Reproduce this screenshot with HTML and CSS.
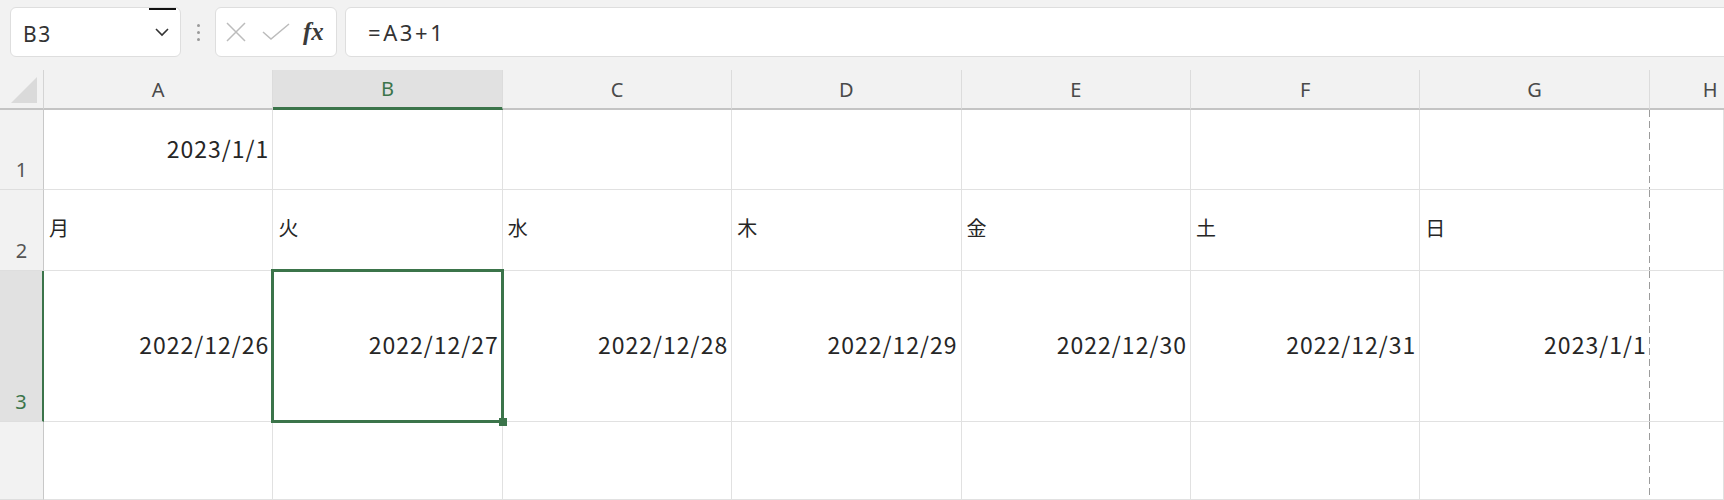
FILE: index.html
```html
<!DOCTYPE html>
<html lang="ja">
<head>
  <meta charset="UTF-8" />
  <title>Book1 - Excel</title>
  <link rel="stylesheet" href="styles.css">
</head>
<body>
  <div class="formula-bar">
    <div class="name-box">
      <span class="cell-ref">B3</span>
      <span class="focus-mark"></span>
      <svg class="chevron" width="16" height="10" viewBox="0 0 16 10"><path d="M2 2 L8 8 L14 2" fill="none" stroke="#333" stroke-width="1.6"/></svg>
    </div>
    <div class="grip"><i></i><i></i><i></i></div>
    <div class="fx-box">
      <svg width="22" height="22" viewBox="0 0 22 22"><path d="M2 2 L20 20 M20 2 L2 20" stroke="#bcbcbc" stroke-width="1.5" fill="none"/></svg>
      <svg width="28" height="18" viewBox="0 0 28 18"><path d="M1 9 L9 16 L27 1" stroke="#bcbcbc" stroke-width="1.5" fill="none"/></svg>
      <span class="fx">fx</span>
    </div>
    <div class="formula-input">=A3+1</div>
  </div>

  <div class="sheet">
    <div class="corner"><span class="corner-tri"></span></div>
    <div class="col-head">A</div>
    <div class="col-head active">B</div>
    <div class="col-head">C</div>
    <div class="col-head">D</div>
    <div class="col-head">E</div>
    <div class="col-head">F</div>
    <div class="col-head">G</div>
    <div class="col-head last">H</div>

    <div class="row-head">1</div>
    <div class="cell num">2023/1/1</div>
    <div class="cell"></div>
    <div class="cell"></div>
    <div class="cell"></div>
    <div class="cell"></div>
    <div class="cell"></div>
    <div class="cell page-end"></div>
    <div class="cell"></div>

    <div class="row-head">2</div>
    <div class="cell day">月</div>
    <div class="cell day">火</div>
    <div class="cell day">水</div>
    <div class="cell day">木</div>
    <div class="cell day">金</div>
    <div class="cell day">土</div>
    <div class="cell day page-end">日</div>
    <div class="cell"></div>

    <div class="row-head active">3</div>
    <div class="cell num">2022/12/26</div>
    <div class="cell num selected">2022/12/27</div>
    <div class="cell num">2022/12/28</div>
    <div class="cell num">2022/12/29</div>
    <div class="cell num">2022/12/30</div>
    <div class="cell num">2022/12/31</div>
    <div class="cell num page-end">2023/1/1</div>
    <div class="cell"></div>

    <div class="row-head"></div>
    <div class="cell"></div>
    <div class="cell"></div>
    <div class="cell"></div>
    <div class="cell"></div>
    <div class="cell"></div>
    <div class="cell"></div>
    <div class="cell page-end"></div>
    <div class="cell"></div>
  </div>
</body>
</html>
```

FILE: styles.css
```css
:root {
  --ui-font: 'Noto Sans', sans-serif;
  --cell-font: 'Noto Sans CJK JP', sans-serif;
  --chrome: #f2f2f2;
  --head-active: #e1e1e1;
  --grid: #e1e1e1;
  --green: #3b744a;
}
* {
  margin: 0;
  padding: 0;
  box-sizing: border-box;
}
body {
  width: 1724px;
  height: 500px;
  overflow: hidden;
  background: #fff;
  font-family: var(--ui-font);
}

/* formula bar */
.formula-bar {
  height: 70px;
  background: var(--chrome);
  display: flex;
  align-items: flex-start;
  padding: 7px 0 0 10px;
}
.name-box {
  position: relative;
  width: 171px;
  height: 50px;
  background: #fff;
  border: 1px solid #dedede;
  border-radius: 6px;
  display: flex;
  align-items: center;
  justify-content: space-between;
  padding: 0 10px 0 12px;
}
.cell-ref {
  font-size: 21px;
  color: #333;
  letter-spacing: 1.5px;
  margin-top: 3px;
}
.focus-mark {
  position: absolute;
  top: 0;
  left: 138px;
  width: 27px;
  height: 2px;
  background: #111;
}
.grip {
  width: 34px;
  height: 50px;
  display: flex;
  flex-direction: column;
  align-items: center;
  justify-content: center;
  gap: 4px;
}
.grip i {
  width: 3px;
  height: 3px;
  border-radius: 50%;
  background: #9a9a9a;
}
.fx-box {
  width: 122px;
  height: 50px;
  background: #fff;
  border: 1px solid #dedede;
  border-radius: 6px;
  display: flex;
  align-items: center;
  gap: 15px;
  padding-left: 9px;
}
.fx {
  font-family: 'Liberation Serif', 'DejaVu Serif', serif;
  font-style: italic;
  font-weight: bold;
  font-size: 25px;
  color: #3a3a3a;
  margin-left: -2px;
}
.formula-input {
  flex: 1;
  height: 50px;
  margin-left: 8px;
  margin-right: -20px;
  background: #fff;
  border: 1px solid #dedede;
  border-radius: 6px;
  display: flex;
  align-items: center;
  padding-left: 22px;
  font-size: 22px;
  letter-spacing: 2.6px;
  color: #333;
}

/* sheet grid */
.sheet {
  display: grid;
  grid-template-columns: 44px repeat(7, 229.4px) 1fr;
  grid-template-rows: 40px 80px 81px 151px 78px;
}
.corner {
  background: var(--chrome);
  border-right: 1px solid #d4d4d4;
  border-bottom: 2px solid #c4c4c4;
  position: relative;
}
.corner-tri {
  position: absolute;
  left: 11px;
  bottom: 5px;
  width: 0;
  height: 0;
  border-left: 26px solid transparent;
  border-bottom: 26px solid #dadada;
}
.col-head {
  background: var(--chrome);
  border-right: 1px solid #dcdcdc;
  border-bottom: 2px solid #c4c4c4;
  display: flex;
  align-items: center;
  justify-content: center;
  font-size: 20px;
  color: #4a4a4a;
}
.col-head.active {
  background: var(--head-active);
  color: var(--green);
  border-bottom: 3px solid var(--green);
}
.col-head.last {
  justify-content: flex-start;
  padding-left: 53px;
  border-right: 0;
}
.row-head {
  background: var(--chrome);
  border-right: 1px solid #c8c8c8;
  border-bottom: 1px solid #dedede;
  display: flex;
  align-items: flex-end;
  justify-content: center;
  padding-bottom: 6px;
  font-size: 20px;
  color: #555;
}
.row-head.active {
  background: var(--head-active);
  color: var(--green);
  border-right: 2px solid var(--green);
}
.cell {
  border-right: 1px solid var(--grid);
  border-bottom: 1px solid var(--grid);
  display: flex;
  align-items: center;
  padding: 0 3px 4px 6px;
  font-family: var(--cell-font);
  font-size: 23px;
  color: #262626;
  white-space: nowrap;
}
.cell.num {
  justify-content: flex-end;
  letter-spacing: 1px;
}
.cell.day {
  font-size: 20px;
  padding-left: 5px;
  padding-bottom: 6px;
}
.cell.page-end {
  border-right: 0;
  background: linear-gradient(to bottom, #9c9c9c 7px, transparent 7px) right top / 1px 11px repeat-y;
}
.cell.selected {
  position: relative;
}
.cell.selected::after {
  content: '';
  position: absolute;
  left: -2px;
  top: -2px;
  right: -2px;
  bottom: -2px;
  border: 3px solid var(--green);
}
.cell.selected::before {
  content: '';
  position: absolute;
  right: -5px;
  bottom: -5px;
  width: 8px;
  height: 8px;
  background: var(--green);
  z-index: 1;
}
```
